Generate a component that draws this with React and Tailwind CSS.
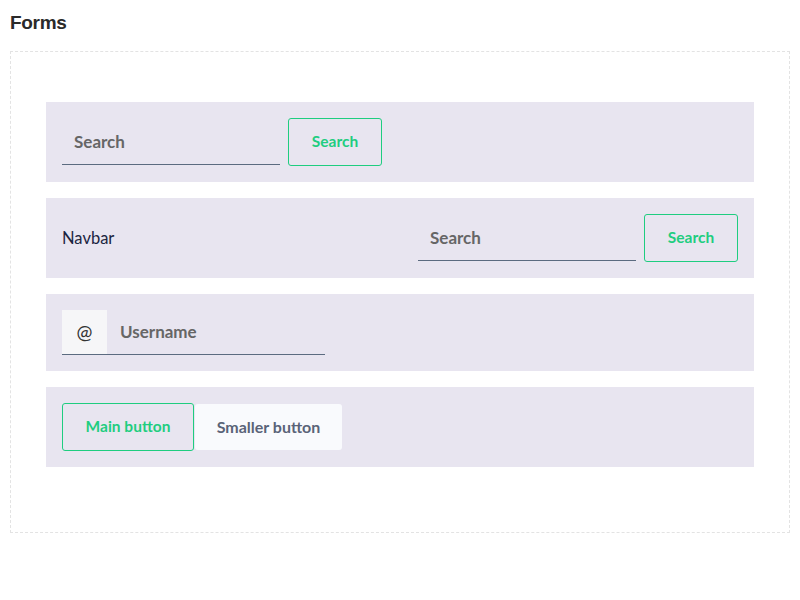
import React from 'react';

const font = { fontFamily: 'Lato, "Noto Sans", sans-serif' };

const SearchInput = () => (
  <div className="w-[218px] h-[46px] flex items-center border-b border-[#5b6b80] pl-[12px]">
    <span className="text-[17px] font-bold text-[#666666]">Search</span>
  </div>
);

const GreenButton = ({ children, className = '' }) => (
  <button className={`h-[48px] border border-[#1fcd80] rounded-[3px] text-[15.5px] font-bold text-[#1fcd80] ${className}`}>
    {children}
  </button>
);

const App = () => {
  return (
    <div className="bg-white min-h-[600px] px-[10px] pt-[12px]" style={font}>
      <h1 className="text-[19px] leading-[22px] font-bold text-[#2a2a2a] tracking-[-0.3px]" style={{ fontFamily: '"Liberation Sans", Arial, sans-serif' }}>
        Forms
      </h1>
      <div className="mt-[17px] w-[780px] border border-dashed border-[#e3e3e3] pl-[35px] pr-[35px] pt-[50px] pb-[65px] flex flex-col gap-4">
        <div className="h-[80px] bg-[#e8e5f0] px-4 flex items-center gap-2">
          <SearchInput />
          <GreenButton className="w-[94px]">Search</GreenButton>
        </div>

        <div className="h-[80px] bg-[#e8e5f0] px-4 flex items-center">
          <span className="text-[16.5px] text-[#1b2440]">Navbar</span>
          <div className="ml-auto flex items-center gap-2">
            <SearchInput />
            <GreenButton className="w-[94px]">Search</GreenButton>
          </div>
        </div>

        <div className="h-[77px] bg-[#e8e5f0] px-4 flex items-center">
          <div className="flex w-[263px] h-[45px] border-b border-[#5b6b80]">
            <div className="w-[45px] bg-[#f6f6f8] flex items-center justify-center text-[19px] text-[#333333]">@</div>
            <div className="flex-1 flex items-center pl-[13px]">
              <span className="text-[17px] font-bold text-[#666666]">Username</span>
            </div>
          </div>
        </div>

        <div className="h-[80px] bg-[#e8e5f0] px-4 flex items-center gap-px">
          <GreenButton className="w-[132px]">Main button</GreenButton>
          <button className="w-[147px] h-[46px] bg-[#f9fafd] rounded-[3px] text-[16px] font-bold text-[#5a6378]">
            Smaller button
          </button>
        </div>
      </div>
    </div>
  );
};

export default App;
